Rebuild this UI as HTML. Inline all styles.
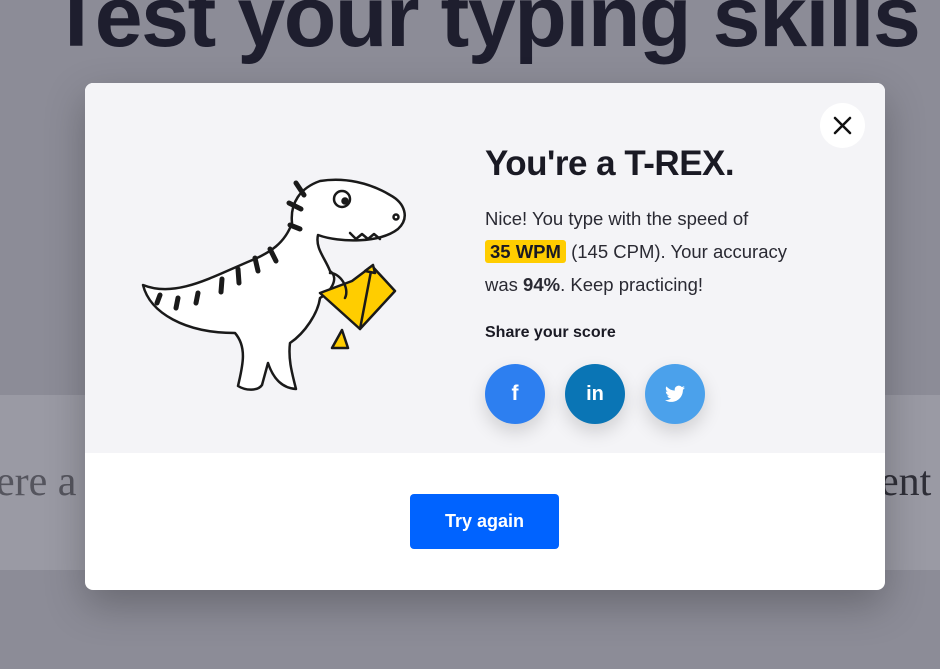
<!DOCTYPE html>
<html><head><meta charset="utf-8"><style>
*{margin:0;padding:0;box-sizing:border-box}
body{width:940px;height:669px;overflow:hidden;background:#8c8c97;position:relative;font-family:"Liberation Sans",sans-serif}
.h1{position:absolute;left:50px;top:-26px;font-size:86px;line-height:1;font-weight:bold;color:#1e1e2e;letter-spacing:-1.4px;white-space:nowrap}
.band{position:absolute;left:0;top:395px;width:940px;height:175px;background:#9a9aa4}
.bt{position:absolute;top:458px;font-family:"Liberation Serif",serif;font-size:42px;color:#55555e}
.modal{position:absolute;left:85px;top:83px;width:800px;height:507px;background:#fff;border-radius:8px;overflow:hidden;box-shadow:0 15px 40px rgba(0,0,0,.25)}
.top{position:absolute;left:0;top:0;width:800px;height:370px;background:#f4f4f7}
.close{position:absolute;left:735px;top:20px;width:45px;height:45px;border-radius:50%;background:#fff}
h2{position:absolute;left:400px;top:61px;font-size:35px;font-weight:bold;color:#1a1a24;letter-spacing:-0.5px}
.p{position:absolute;left:400px;top:119px;width:380px;font-size:18.5px;line-height:33px;color:#2a2a33;white-space:nowrap}
.hl{background:#ffcd00;border-radius:3px;padding:1px 5px;font-weight:bold;color:#1a1a24}
.share{position:absolute;left:400px;top:241px;font-size:16px;font-weight:bold;color:#1a1a24}
.c{position:absolute;top:281px;width:60px;height:60px;border-radius:50%;box-shadow:0 8px 18px rgba(0,0,0,.15);color:#fff;font-weight:bold;font-size:21px;text-align:center;line-height:60px}
.btn{position:absolute;left:325px;top:411px;width:149px;height:55px;background:#0063ff;border-radius:4px;color:#fff;font-weight:bold;font-size:18px;text-align:center;line-height:55px}
</style></head><body>
<div class="h1">Test your typing skills</div>
<div class="band"></div>
<div class="bt" style="left:-4px">ere a</div>
<div class="bt" style="left:880px;color:#2f2f38">ent</div>
<div class="modal">
<div class="top"></div>
<svg style="position:absolute;left:45px;top:80px" width="300" height="240" viewBox="130 160 300 240" fill="none" stroke="#1a1a1a" stroke-width="2.5" stroke-linecap="round" stroke-linejoin="round">
<path d="M143 282 C150 310 185 330 235 330 C248 345 242 365 238 383 C246 388 258 388 262 382 L268 360 C272 372 280 385 296 386 C292 370 288 356 290 340 C305 330 318 310 320 295 C330 290 340 275 330 268 C325 255 315 245 318 232 C340 240 380 240 398 226 C410 215 405 200 390 192 C370 180 345 174 320 178 C300 185 290 200 292 220 C285 240 270 250 250 258 C210 275 175 295 143 282 Z" fill="#fff"/>
<path d="M296 180 l8 12 M289 200 l12 6 M290 222 l10 4 M270 246 l6 12 M255 255 l3 13 M238 266 l1 14 M222 276 l-1 13 M198 290 l-2 10 M178 295 l-2 10 M160 292 l-3 8" stroke-width="5"/>
<circle cx="342" cy="196" r="8" fill="#fff"/><circle cx="345" cy="198" r="2.5" fill="#1a1a1a"/>
<circle cx="396" cy="214" r="2.5"/>
<path d="M350 230 l6 6 l6 -5 l6 5 l6 -5 l6 5"/>
<path d="M320 290 L352 278 L372 263 L395 288 L360 326 Z" fill="#ffcd00"/>
<path d="M372 263 L360 326"/>
<path d="M330 270 C340 270 350 285 345 295"/>
<path d="M365 268 l8 -6 l2 8 Z M332 345 l10 -18 l6 18 Z" fill="#ffcd00"/>
</svg>
<div class="close"><svg width="45" height="45" viewBox="0 0 45 45"><path d="M15 15 L30 30 M30 15 L15 30" stroke="#111" stroke-width="2.5" stroke-linecap="round"/></svg></div>
<h2>You're a T-REX.</h2>
<div class="p">Nice! You type with the speed of<br><span class="hl">35 WPM</span> (145 CPM). Your accuracy<br>was <b>94%</b>. Keep practicing!</div>
<div class="share">Share your score</div>
<div class="c" style="left:400px;background:#2d7ff0">f</div>
<div class="c" style="left:480px;background:#0a75b5;font-size:20px">in</div>
<div class="c" style="left:560px;background:#4ba1eb"><svg width="20" height="18" viewBox="0 0 24 20" style="margin-top:21px"><path fill="#fff" d="M24 2.4a10 10 0 0 1-2.8.8A5 5 0 0 0 23.3.4a10 10 0 0 1-3.1 1.2A4.9 4.9 0 0 0 11.800 6 14 14 0 0 1 1.7.9a4.9 4.9 0 0 0 1.5 6.6A4.9 4.9 0 0 1 1 6.9a4.9 4.9 0 0 0 3.9 4.9 5 5 0 0 1-2.2.1 4.9 4.9 0 0 0 4.6 3.4A9.9 9.9 0 0 1 0 17.3 14 14 0 0 0 7.5 19.5c9.1 0 14-7.5 14-14v-.6A10 10 0 0 0 24 2.4z"/></svg></div>
<div class="btn">Try again</div>
</div>
</body></html>
